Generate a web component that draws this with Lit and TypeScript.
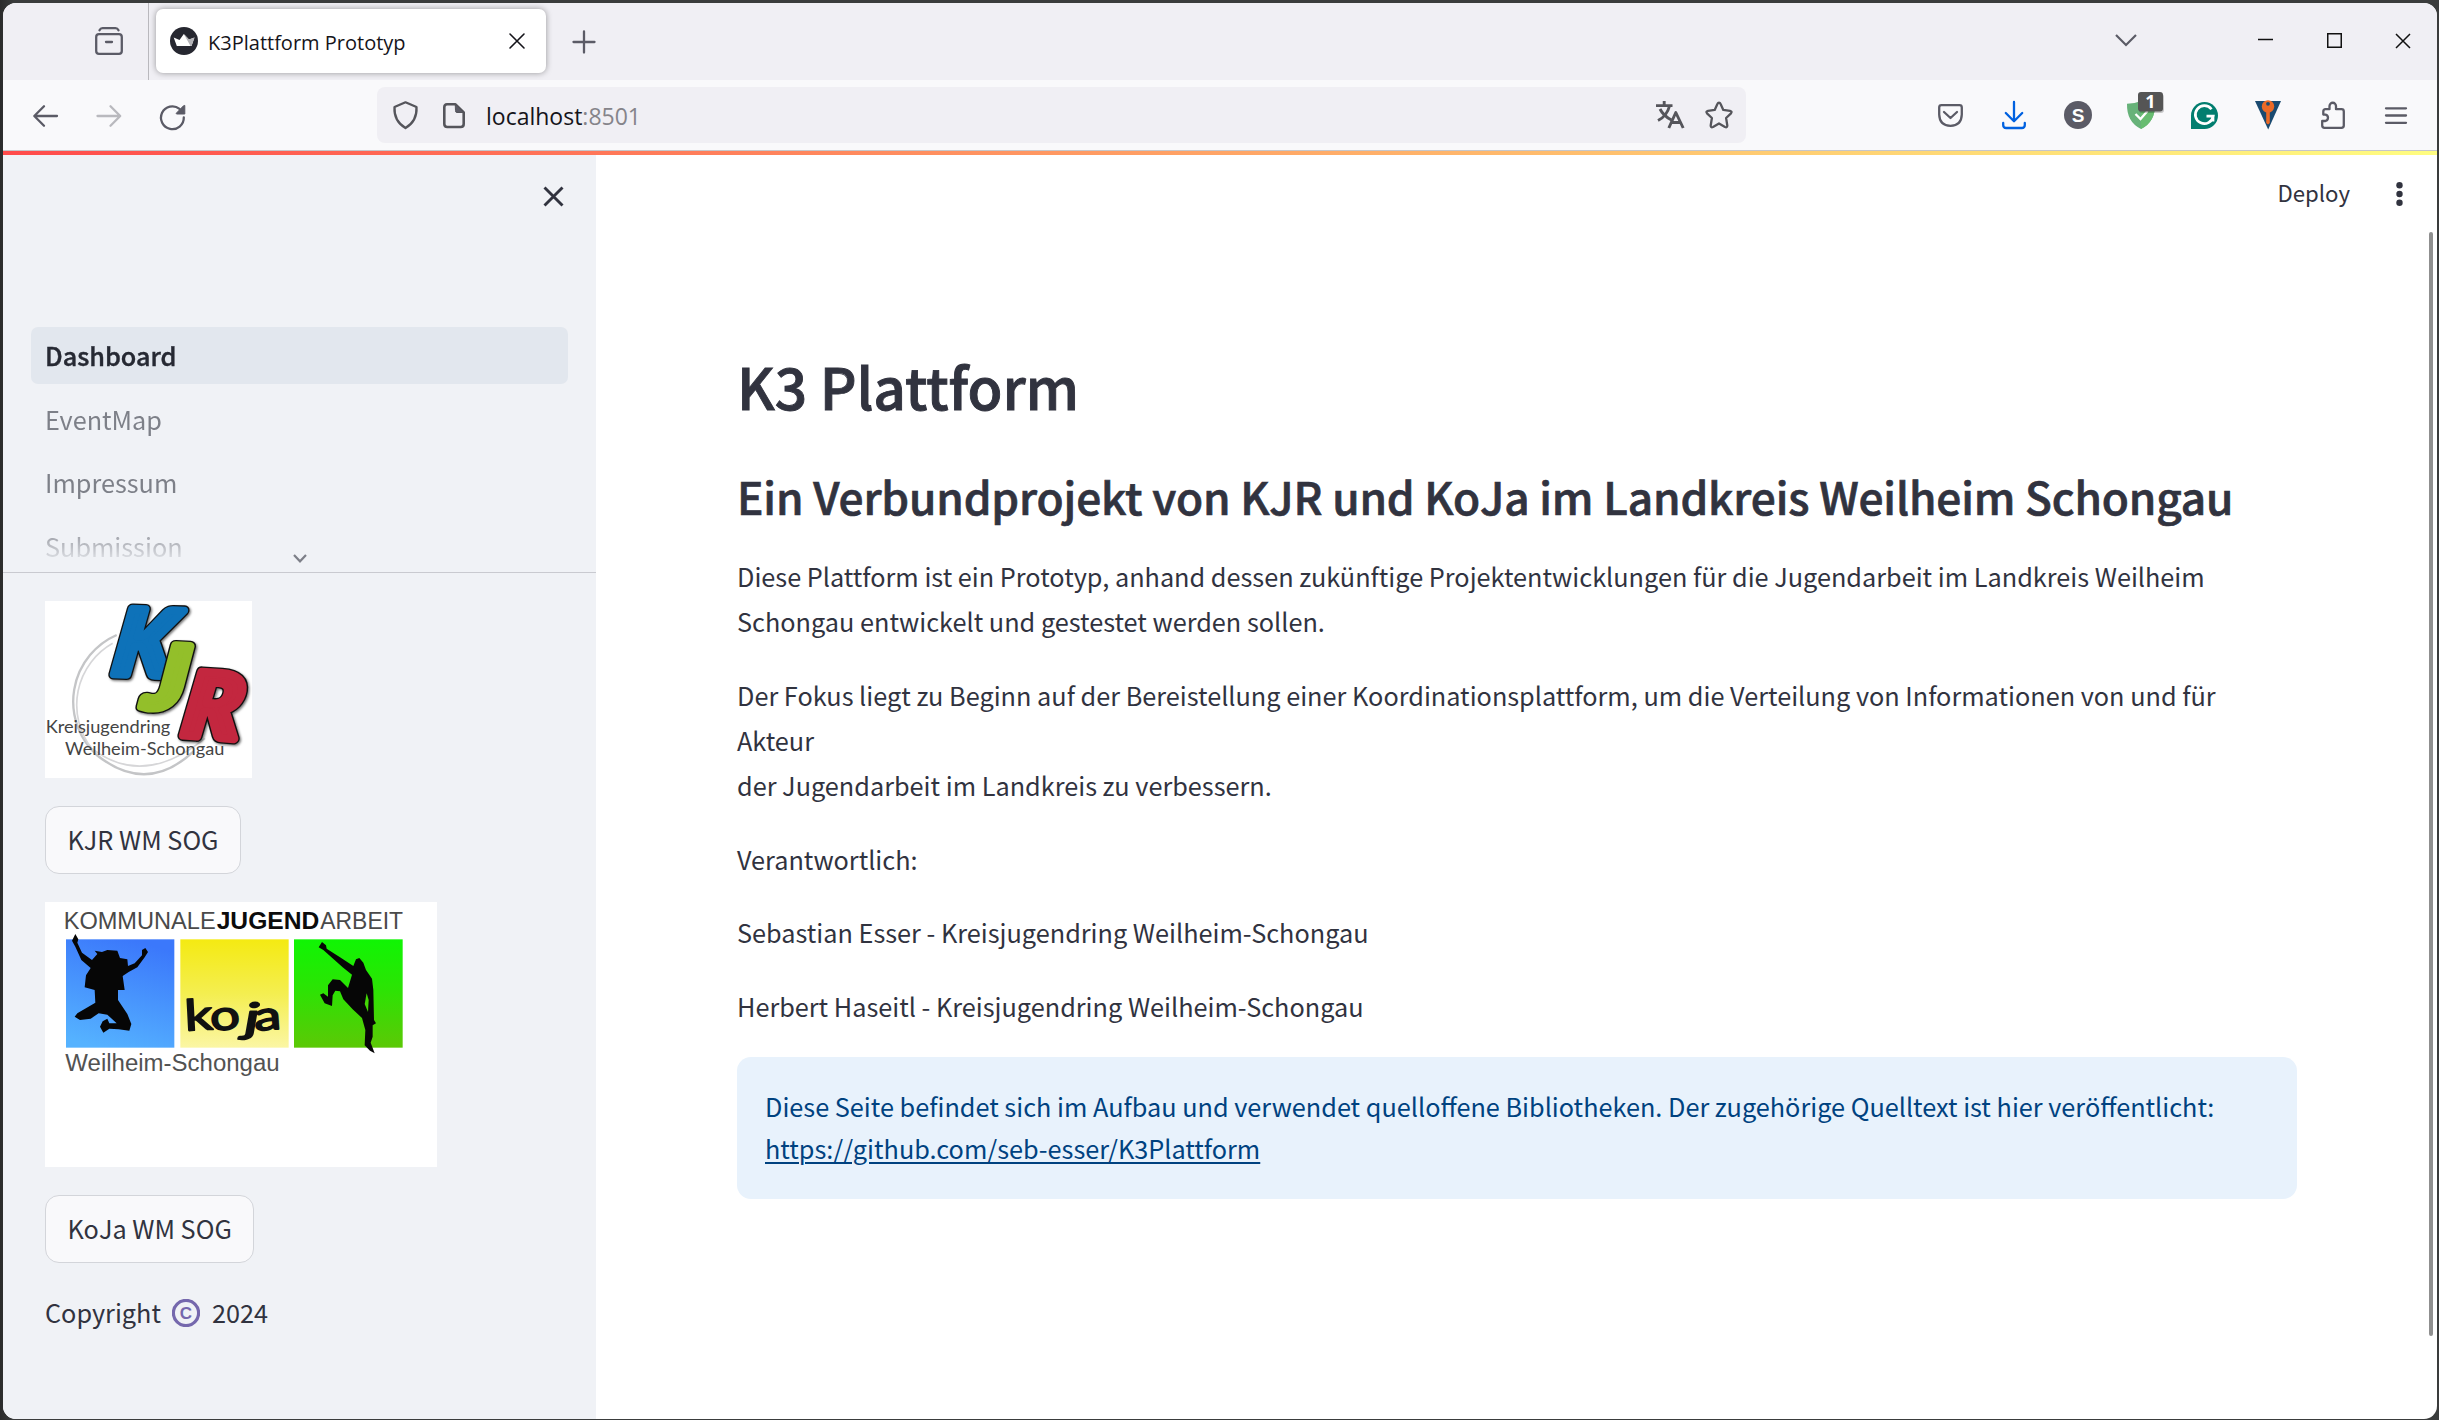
import { LitElement, html, css, svg } from "lit";
import { customElement } from "lit/decorators.js";

const ICONS = {
  archive: svg`<path d="M4.5 3.2 Q5.5 1.2 7.5 1.2 H20.5 Q22.500 1.2 23.500 3.2" /><rect x="1.200" y="7.200" width="25.600" height="19.600" rx="2.800" /><path d="M11 15 H17" />`,
  cross: svg`<path d="M1 1 L15 15 M15 1 L1 15" />`,
  plus: svg`<path d="M11 0.500 V21.500 M0.500 11 H21.500" />`,
  chevron: svg`<path d="M1 1 L11 11 L21 1" />`,
  minimise: svg`<path d="M0 7.500 H15" />`,
  maximise: svg`<rect x="0.750" y="0.750" width="13.500" height="13.500" />`,
  back: svg`<path d="M24 11 H1.500 M11 1.200 L1.300 11 L11 20.800" />`,
  forward: svg`<path d="M0.500 11 H23 M13.500 1.200 L23.200 11 L13.500 20.800" />`,
  reload: svg`<path d="M23.800 12.500 A11.400 11.400 0 1 1 19.500 3.800" /><path class="solid" d="M24.800 0.800 V9 H16.500 Q16 8.500 16.500 8 L23.500 0.800 Z" />`,
  shield: svg`<path d="M12.500 1.300 L23.500 6 Q24.300 20 12.500 27 Q0.700 20 1.500 6 Z" />`,
  page: svg`<path d="M4 1.300 H12.500 L20.700 9.500 V21 Q20.700 24 17.700 24 H4.300 Q1.300 24 1.300 21 V4.300 Q1.300 1.300 4 1.300 Z" /><path class="solid" d="M12.500 1.300 L20.700 9.500 H14 Q12.500 9.500 12.500 8 Z" />`,
  translate: svg`<path d="M0 4.600 H16.500 M8.200 0 V4.600 M4 8 Q7.500 15 15.500 19 M13.500 5 Q11 15 2 19.500" /><path d="M12.800 27 L19.800 11.500 L27.200 27 M15.500 21.500 H24.500" />`,
  star: svg`<path d="M14 1.600 Q15 1.600 15.500 2.800 L18.300 8.900 L25 9.800 Q27.500 10.500 26 12.300 L21.100 17 L22.300 24.500 Q22.300 27 20 26 L14 22.500 L8 26 Q5.700 27 5.700 24.500 L6.900 17 L2 12.300 Q0.500 10.500 3 9.800 L9.700 8.900 L12.500 2.800 Q13 1.600 14 1.600 Z" />`,
  pocket: svg`<path d="M3.500 1.200 H21.500 Q23.800 1.200 23.800 3.500 V10.500 Q23.500 21.500 12.500 21.800 Q1.500 21.500 1.200 10.500 V3.500 Q1.200 1.200 3.500 1.200 Z M6 8 L12.500 14 L19 8" />`,
  download: svg`<path d="M12 0 V19 M3.800 11 L12 19.200 L20.200 11 M1.200 21 V23 Q1.200 26 4.200 26 H19.800 Q22.800 26 22.800 23 V21" />`,
  puzzle: svg`<path d="M2.300 10.600 Q2.300 8.200 4.600 8.200 H8.500 V5 A3.200 3.200 0 0 1 15 5 V8.200 H20.500 Q22.800 8.200 22.800 10.500 V24.500 Q22.800 26.800 20.500 26.800 H3.500 Q1.200 26.800 1.200 24.500 V20 H4.500 A3.300 3.300 0 0 0 4.500 13.600 H2.300 Z" />`,
  menu: svg`<path d="M1 1.300 H21 M1 8.500 H21 M1 15.800 H21" />`,
};

function icon(name: keyof typeof ICONS, w: number, h: number) {
  return html`<svg class="icon ${name}" width=${w} height=${h} viewBox="0 0 ${w} ${h}">${ICONS[name]}</svg>`;
}

@customElement("browser-chrome")
export class BrowserChrome extends LitElement {
  static styles = css`
    :host { display: block; font-family: "Open Sans", "Noto Sans", sans-serif; }
    svg { display: block; flex: none; overflow: visible; }
    .icon { fill: none; stroke: #5b5b66; stroke-width: 2.300; stroke-linecap: round; stroke-linejoin: round; }
    .icon .solid { fill: #5b5b66; stroke-width: 1; }
    .tabs { display: flex; align-items: center; height: 77px; background: #f0eff4; }
    .archive { margin: 0 0 1px 92px; }
    .divider { width: 1px; height: 77px; margin: 0 7px 0 25px; background: #b9b8bd; }
    .tab { display: flex; align-items: center; box-sizing: border-box; width: 390px; height: 64px; margin-right: 27px; margin-bottom: 1px; padding: 0 21px 0 14px; border-radius: 7px; background: #fff; box-shadow: 0 0 6px rgba(0, 0, 0, 0.38); }
    .title { flex: 1; margin: 3px 0 0 10px; font-size: 20px; line-height: 28px; color: #15141a; white-space: nowrap; }
    .tab .cross { stroke: #15141a; stroke-width: 1.600; }
    .window { display: flex; align-items: center; margin-left: auto; padding: 0 26px 2px 0; }
    .window .icon { stroke: #111; stroke-width: 1.500; stroke-linecap: butt; stroke-linejoin: miter; }
    .window .chevron { margin: 0 121px 1px 0; stroke: #5b5b66; stroke-width: 2.200; }
    .window .minimise { margin: -2px 54px 0 0; }
    .window .maximise { margin-right: 53px; }
    .bar { display: flex; align-items: center; height: 70px; background: #f9f9fb; border-bottom: 1px solid #c6c6ca; }
    .back { margin-left: 30px; }
    .forward { margin-left: 40px; stroke: #b9b9be; }
    .reload { margin-left: 39px; }
    .back, .forward { margin-top: 2px; }
    .reload { margin-top: 4px; }
    .url { display: flex; align-items: center; box-sizing: border-box; width: 1369px; height: 56px; margin-left: 192px; padding: 0 13px 0 16px; border-radius: 8px; background: #f0eff4; }
    .url .icon { stroke: #55555b; }
    .url .page { margin-left: 25px; stroke-width: 2.600; }
    .address { flex: 1; margin: 1px 0 0 21px; font-size: 23px; line-height: 32px; color: #15141a; }
    .port { color: #85848a; }
    .url .translate { stroke-width: 2.900; stroke-linecap: butt; }
    .url .star { margin-left: 21px; }
    .tools { display: flex; align-items: center; margin-left: auto; padding-right: 30px; }
    .download { margin-left: 39px; stroke: #0061e0; }
    .badge-s { margin-left: 38px; }
    .guard { margin-left: 35px; }
    .grammar { margin-left: 36px; }
    .vault { margin-left: 37px; }
    .puzzle { margin-left: 39px; }
    .menu { margin-left: 40px; }
    .letter { font-family: "Liberation Sans", sans-serif; font-weight: 700; fill: #fff; text-anchor: middle; }
    .count { font-family: "Open Sans", sans-serif; font-weight: 700; font-size: 18px; fill: #fff; text-anchor: middle; }
  `;

  render() {
    return html`
      <div class="tabs">
        ${icon("archive", 28, 28)}
        <div class="divider"></div>
        <div class="tab">
          <svg width="28" height="28" viewBox="0 0 28 28">
            <circle cx="14" cy="14" r="14" fill="#262730" />
            <path d="M3.700 10.500 L9.500 13 L13.800 7 L19 12.500 L24.500 10.500 L21.500 19 H6.800 Z" fill="#fff" />
            <path d="M13.800 7 L20.500 19 H21.500 L24.500 10.500 L19 12.500 Z" fill="#b4b4b8" />
          </svg>
          <span class="title">K3Plattform Prototyp</span>
          ${icon("cross", 16, 16)}
        </div>
        ${icon("plus", 22, 22)}
        <div class="window">
          ${icon("chevron", 22, 12)} ${icon("minimise", 15, 15)} ${icon("maximise", 15, 15)} ${icon("cross", 16, 16)}
        </div>
      </div>
      <div class="bar">
        ${icon("back", 24, 22)} ${icon("forward", 24, 22)} ${icon("reload", 25, 25)}
        <div class="url">
          ${icon("shield", 25, 28)} ${icon("page", 22, 25)}
          <span class="address">localhost<span class="port">:8501</span></span>
          ${icon("translate", 28, 28)} ${icon("star", 28, 28)}
        </div>
        <div class="tools">
          ${icon("pocket", 25, 23)} ${icon("download", 24, 27)}
          <svg class="badge-s" width="28" height="28" viewBox="0 0 28 28">
            <circle cx="14" cy="14" r="14" fill="#5b5b66" />
            <text class="letter" x="14" y="20.700" font-size="19">S</text>
          </svg>
          <svg class="guard" width="28" height="28" viewBox="0 0 28 28">
            <path d="M14 0 Q20 2.500 28 2.800 Q28.500 21 14 28 Q-0.500 21 0 2.800 Q8 2.500 14 0 Z" fill="#67b279" />
            <path d="M14 0 Q20 2.500 28 2.800 Q28.500 21 14 28 Z" fill="#68bc71" />
            <path d="M8.500 13 L13.500 18 L20.500 10" fill="none" stroke="#fff" stroke-width="2.300" />
            <rect x="12" y="-7" width="25" height="19" rx="3" fill="#000" opacity="0.200" />
            <rect x="11" y="-9" width="25" height="19.500" rx="3" fill="#555" />
            <text class="count" x="23.500" y="7.200">1</text>
          </svg>
          <svg class="grammar" width="27" height="27" viewBox="0 0 27 27">
            <path d="M0 27 V13.500 A13.500 13.500 0 1 1 13.500 27 Z" fill="#027e6f" />
            <path d="M20.500 7.200 A9 9 0 1 0 22.200 14.200 H15.500 M22 14.200 V19.500" fill="none" stroke="#fff" stroke-width="2.700" />
          </svg>
          <svg class="vault" width="27" height="28" viewBox="0 0 27 28">
            <path d="M0 0 H26 L13.200 28.500 Z" fill="#1a4a70" />
            <circle cx="13" cy="5.500" r="6.200" fill="#ec6a26" />
            <path d="M11.200 10 H14.800 V22 L13 23.500 L11.200 22 Z" fill="#ec6a26" />
            <circle cx="13" cy="2.800" r="1.900" fill="#1a4a70" />
          </svg>
          ${icon("puzzle", 24, 28)} ${icon("menu", 22, 17)}
        </div>
      </div>
    `;
  }
}

@customElement("side-panel")
export class SidePanel extends LitElement {
  static styles = css`
    :host { display: block; box-sizing: border-box; width: 593px; height: 100%; background: #f0f2f6; color: #31333f; font-family: "Noto Sans CJK SC", "Noto Sans", sans-serif; font-size: 25.260px; }
    svg { display: block; }
    .head { display: flex; justify-content: flex-end; box-sizing: border-box; height: 176px; padding: 35px 32px 0 0; }
    .head svg { stroke: #31333f; stroke-width: 2.900; fill: none; }
    .nav { position: relative; height: 245px; border-bottom: 1px solid #c9cad0; }
    .list { display: flex; flex-direction: column; gap: 7px; height: 245px; overflow: hidden; padding: 0 28px; mask-image: linear-gradient(#000 0, #000 194px, transparent 240px); }
    .item { flex: none; height: 56.500px; padding-left: 14px; border-radius: 7px; line-height: 56.500px; color: rgba(49, 51, 63, 0.600); }
    .item.active { background: #e2e7ee; color: #262933; font-weight: 500; -webkit-text-stroke: 0.400px #262933; }
    .more { position: absolute; left: 290px; top: 227px; fill: none; stroke: #7d7f88; stroke-width: 2.200; }
    .body { display: flex; flex-direction: column; align-items: flex-start; gap: 28px; padding: 28px 42px; }
    .button { box-sizing: border-box; height: 68px; padding: 0 21.500px; border: 1.500px solid #d3d5da; border-radius: 14px; background: #f9f9fb; line-height: 65px; white-space: nowrap; }
    .kjr { overflow: visible; }
    .kjr .big { font-family: "Lato", "Liberation Sans", sans-serif; font-weight: 900; font-style: italic; stroke-linejoin: round; }
    .kjr .shadow { filter: drop-shadow(4px 4px 3px rgba(0, 0, 0, 0.550)); }
    .kjr .small { font-family: "Lato", sans-serif; fill: #444; }
    .koja-logo { font-family: "Liberation Sans", sans-serif; fill: #4a4a4a; }
    .script { font-family: "Lato", sans-serif; font-weight: 400; fill: #111; stroke: #111; stroke-width: 5; stroke-linejoin: round; }
    .copy { display: flex; align-items: center; line-height: 44px; margin-top: -1px; }
    .copy svg { margin: 1px 12px 0 11px; }
    .mark { font-family: "Liberation Sans", sans-serif; font-weight: 700; fill: #7568ad; text-anchor: middle; }
  `;

  letter(ch: string, x: number, y: number, size: number, fill: string, transform: string) {
    return svg`<g class="shadow"><g transform="translate(${x} ${y}) ${transform}">
      <text class="big" font-size=${size} fill="#111" stroke="#111" stroke-width="33">${ch}</text>
      <text class="big" font-size=${size} fill=${fill} stroke=${fill} stroke-width="25">${ch}</text>
    </g></g>`;
  }

  render() {
    return html`
      <div class="head">
        <svg width="21" height="21" viewBox="0 0 21 21"><path d="M1.500 1.500 L19.500 19.500 M19.500 1.500 L1.500 19.500" /></svg>
      </div>
      <div class="nav">
        <div class="list">
          <div class="item active">Dashboard</div>
          <div class="item">EventMap</div>
          <div class="item">Impressum</div>
          <div class="item">Submission</div>
        </div>
        <svg class="more" width="14" height="9" viewBox="0 0 14 9"><path d="M1 1 L7 7.300 L13 1" /></svg>
      </div>
      <div class="body">
        <svg class="kjr" width="207" height="177" viewBox="75 63 621 531">
          <rect x="75" y="63" width="621" height="531" fill="#fff" />
          <g fill="none" stroke="#c4c5c7" stroke-width="7">
            <path d="M290 165 A218 218 0 0 0 230 525 Q380 645 520 515" />
            <path d="M278 190 A212 212 0 0 0 215 505 Q370 625 555 475" stroke="#d6d6d8" stroke-width="5" />
          </g>
          ${this.letter("K", 272, 282, 272, "#0e72b9", "rotate(2) skewX(-7)")}
          ${this.letter("J", 370, 382, 262, "#93bf2a", "rotate(3) skewX(-4) scale(1.120 1)")}
          ${this.letter("R", 480, 466, 268, "#c3273f", "rotate(4) skewX(-5) scale(1.060 1)")}
          <text class="small" x="77" y="459" font-size="50" textLength="374" lengthAdjust="spacingAndGlyphs">Kreisjugendring</text>
          <text class="small" x="135" y="524" font-size="50" textLength="478" lengthAdjust="spacingAndGlyphs">Weilheim-Schongau</text>
        </svg>
        <div class="button">KJR WM SOG</div>
        <svg class="koja-logo" width="392" height="265" viewBox="75 66 1176 795">
          <defs>
            <linearGradient id="blue" x1="0.600" y1="0" x2="0.300" y2="1"><stop offset="0" stop-color="#3b78fb" /><stop offset="1" stop-color="#55b2ff" /></linearGradient>
            <linearGradient id="yellow" x1="0" y1="0" x2="0" y2="1"><stop offset="0" stop-color="#f4ea12" /><stop offset="0.500" stop-color="#f4ee50" /><stop offset="1" stop-color="#fbf6a4" /></linearGradient>
            <linearGradient id="green" x1="0" y1="0" x2="0" y2="1"><stop offset="0" stop-color="#10f504" /><stop offset="0.450" stop-color="#2be404" /><stop offset="1" stop-color="#5cc806" /></linearGradient>
          </defs>
          <rect x="75" y="66" width="1176" height="795" fill="#fff" />
          <text x="131" y="147" font-size="71" textLength="456" lengthAdjust="spacingAndGlyphs">KOMMUNALE</text>
          <text x="590" y="147" font-size="71" font-weight="700" fill="#0c0c0c" textLength="308" lengthAdjust="spacingAndGlyphs">JUGEND</text>
          <text x="901" y="147" font-size="71" textLength="248" lengthAdjust="spacingAndGlyphs">ARBEIT</text>
          <rect x="138" y="178" width="325" height="325" fill="url(#blue)" />
          <rect x="481" y="178" width="325" height="325" fill="url(#yellow)" />
          <rect x="822" y="178" width="326" height="325" fill="url(#green)" />
          <g fill="#060606">
            <path d="M166 162 L175 178 L172 188 L186 218 L216 240 L232 222 L224 212 L246 216 L262 210 L292 212 L300 234 L322 238 L324 258 L344 250 L366 226 L366 210 L376 204 L384 216 L374 232 L352 262 L326 276 L308 288 L314 330 L294 330 L294 360 L322 402 L334 432 L328 452 L296 448 L268 446 L250 458 L240 440 L248 424 L262 416 L268 430 L290 430 L262 404 L236 400 L212 416 L180 420 L164 410 L172 400 L226 368 L224 330 L194 322 L198 286 L212 264 L184 240 L166 200 L156 182 Z" />
            <path d="M906 186 L918 196 L920 206 L960 232 L1000 258 L1008 238 L1018 234 L1030 248 L1038 270 L1056 296 L1060 330 L1062 420 L1068 430 L1058 436 L1058 470 L1052 488 L1064 520 L1050 512 L1034 496 L1036 450 L1026 414 L998 388 L970 358 L960 334 L946 332 L938 346 L936 378 L914 370 L900 344 L910 340 L924 350 L924 316 L938 298 L960 300 L984 324 L996 284 L968 262 L910 210 L896 202 Z" />
            <path d="M1040 340 L1046 360 L1044 396 L1034 372 Z" fill="#43d605" />
          </g>
          <text class="script" font-size="128" transform="translate(496 452) rotate(-3) scale(1.300 1)">k</text>
          <text class="script" font-size="132" transform="translate(574 454) rotate(-6) scale(1.200 0.950)">o</text>
          <text class="script" font-size="122" transform="translate(666 456) skewX(-10) scale(1.600 1)">j</text>
          <text class="script" font-size="128" transform="translate(704 452) rotate(-4) scale(1.280 0.950)">a</text>
          <text x="136" y="572" font-size="70" fill="#525252" textLength="643" lengthAdjust="spacingAndGlyphs">Weilheim-Schongau</text>
        </svg>
        <div class="button">KoJa WM SOG</div>
        <div class="copy">
          <span>Copyright</span>
          <svg width="28" height="28" viewBox="0 0 28 28">
            <circle cx="14" cy="14" r="12.600" fill="none" stroke="#7568ad" stroke-width="3.200" />
            <text class="mark" x="14" y="19.900" font-size="17">C</text>
          </svg>
          <span>2024</span>
        </div>
      </div>
    `;
  }
}

@customElement("app-root")
export class AppRoot extends LitElement {
  static styles = css`
    :host { display: block; box-sizing: border-box; width: 2439px; height: 1420px; padding: 3px 2px 1px 3px; overflow: hidden; background: linear-gradient(90deg, #2b2b2b 0, #3a3c3c 14px); color: #31333f; font-family: "Noto Sans CJK SC", "Noto Sans", sans-serif; font-size: 25.275px; }
    .frame { display: flex; flex-direction: column; height: 1416px; border-radius: 13px; overflow: hidden; background: #fff; }
    .app { position: relative; display: flex; flex: 1; min-height: 0; }
    .stripe { position: absolute; left: 0; right: 0; top: 0; height: 4px; background: linear-gradient(90deg, #ff4b4b, #fffd80); }
    .view { position: relative; flex: 1; }
    .actions { display: flex; justify-content: flex-end; align-items: center; gap: 46px; height: 86px; padding-right: 34px; font-size: 22.200px; line-height: 36px; }
    .actions span { margin-top: -4px; }
    .actions svg { display: block; fill: #31333f; }
    .main { width: 1560px; padding: 111.400px 0 0 141px; }
    h1, h2, p { margin: 0; }
    h1 { font-size: 56.900px; line-height: 75.600px; font-weight: 500; letter-spacing: -0.100px; -webkit-text-stroke: 0.900px #31333f; }
    h2 { margin-top: 43.200px; font-size: 44.200px; line-height: 59px; font-weight: 500; letter-spacing: -0.140px; -webkit-text-stroke: 0.700px #31333f; white-space: nowrap; }
    .text { display: flex; flex-direction: column; gap: 28.400px; margin-top: 28.200px; line-height: 45.100px; }
    .note { box-sizing: border-box; height: 142px; padding: 28px; border-radius: 14px; background: #e8f2fc; color: #004280; line-height: 42px; }
    .note a { color: inherit; text-decoration: underline; text-decoration-thickness: 1.500px; text-underline-offset: 3px; }
    .scroll { position: absolute; right: 4px; top: 81px; width: 4px; height: 1104px; border-radius: 2px; background: #8f8f8f; }
  `;

  render() {
    return html`
      <div class="frame">
        <browser-chrome></browser-chrome>
        <div class="app">
          <side-panel></side-panel>
          <div class="view">
            <div class="actions">
              <span>Deploy</span>
              <svg width="7" height="24" viewBox="0 0 7 24"><circle cx="3.500" cy="3.200" r="3.200" /><circle cx="3.500" cy="12" r="3.200" /><circle cx="3.500" cy="20.800" r="3.200" /></svg>
            </div>
            <div class="main">
              <h1>K3 Plattform</h1>
              <h2>Ein Verbundprojekt von KJR und KoJa im Landkreis Weilheim Schongau</h2>
              <div class="text">
                <p>Diese Plattform ist ein Prototyp, anhand dessen zukünftige Projektentwicklungen für die Jugendarbeit im Landkreis Weilheim Schongau entwickelt und gestestet werden sollen.</p>
                <p>Der Fokus liegt zu Beginn auf der Bereistellung einer Koordinationsplattform, um die Verteilung von Informationen von und für Akteur<br />der Jugendarbeit im Landkreis zu verbessern.</p>
                <p>Verantwortlich:</p>
                <p>Sebastian Esser - Kreisjugendring Weilheim-Schongau</p>
                <p>Herbert Haseitl - Kreisjugendring Weilheim-Schongau</p>
                <div class="note">Diese Seite befindet sich im Aufbau und verwendet quelloffene Bibliotheken. Der zugehörige Quelltext ist hier veröffentlicht: <a>https://github.com/seb-esser/K3Plattform</a></div>
              </div>
            </div>
            <div class="scroll"></div>
          </div>
          <div class="stripe"></div>
        </div>
      </div>
    `;
  }
}
